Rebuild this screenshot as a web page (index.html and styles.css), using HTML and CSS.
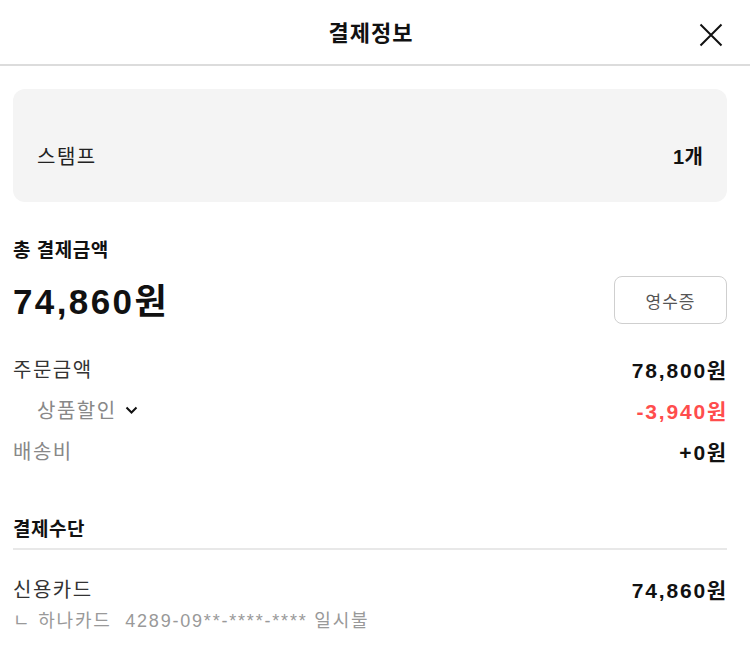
FILE: index.html
```html
<!DOCTYPE html>
<html lang="ko">
<head>
<meta charset="utf-8">
<link rel="stylesheet" href="styles.css">
</head>
<body>
<header class="header">
  <h1 class="title">결제정보</h1>
  <button class="close" aria-label="닫기">
    <svg width="24" height="24" viewBox="0 0 24 24"><path d="M1.5 1.5L22.5 22.5M22.5 1.5L1.5 22.5" stroke="#111" stroke-width="2" fill="none"/></svg>
  </button>
</header>
<main class="content">
  <section class="stamp">
    <span class="stamp-label">스탬프</span>
    <span class="stamp-val">1개</span>
  </section>
  <section class="total">
    <h2 class="sec-title">총 결제금액</h2>
    <div class="total-row">
      <span class="total-amt">74,860원</span>
      <button class="receipt">영수증</button>
    </div>
  </section>
  <section class="details">
    <div class="row"><span class="lbl dark">주문금액</span><span class="val">78,800원</span></div>
    <div class="row"><span class="lbl sub">상품할인 <svg class="chev" width="13" height="8" viewBox="0 0 13 8"><path d="M1.5 1.5L6.5 6.5L11.5 1.5" stroke="#111" stroke-width="2" fill="none"/></svg></span><span class="val red">-3,940원</span></div>
    <div class="row"><span class="lbl">배송비</span><span class="val">+0원</span></div>
  </section>
  <section class="method">
    <h2 class="sec-title method-title">결제수단</h2>
    <div class="row card-row"><span class="lbl dark">신용카드</span><span class="val">74,860원</span></div>
    <div class="card-info">ㄴ 하나카드&nbsp; 4289-09**-****-**** 일시불</div>
  </section>
</main>
</body>
</html>
```

FILE: styles.css
```css
* { box-sizing: border-box; }
html, body { margin: 0; padding: 0; background: #fff; }
body {
  font-family: "Liberation Sans", "Noto Sans CJK KR", sans-serif;
  color: #111;
  width: 750px;
}
.header {
  height: 66px;
  border-bottom: 2px solid #dcdcdc;
  display: flex;
  align-items: center;
  justify-content: center;
  position: relative;
}
.title {
  margin: 0 0 0 -8px;
  font-size: 22px;
  font-weight: 700;
  line-height: 26px;
  letter-spacing: 1px;
  padding-top: 4px;
}
.close {
  position: absolute;
  right: 27px;
  top: 23px;
  width: 24px;
  height: 24px;
  padding: 0;
  border: 0;
  background: none;
  display: flex;
}
.content {
  padding: 23px 23px 0 13px;
}
.stamp {
  background: #f4f4f4;
  border-radius: 12px;
  height: 113px;
  display: flex;
  align-items: center;
  justify-content: space-between;
  padding: 20px 24px 0 24px;
}
.stamp-label { font-size: 20px; color: #222; letter-spacing: 1.5px; }
.stamp-val { font-size: 20px; font-weight: 700; letter-spacing: 0.2px; }
.total { margin-top: 37px; }
.sec-title {
  margin: 0;
  font-size: 19px;
  font-weight: 700;
  line-height: 24px;
  letter-spacing: 0.5px;
}
.total-row {
  display: flex;
  justify-content: space-between;
  align-items: center;
  margin-top: 17px;
  height: 44px;
}
.total-amt {
  font-size: 35px;
  font-weight: 700;
  line-height: 44px;
  letter-spacing: 2.4px;
}
.receipt {
  width: 113px;
  height: 48px;
  border: 1px solid #cfcfcf;
  border-radius: 8px;
  background: #fff;
  font-family: inherit;
  font-size: 17px;
  letter-spacing: 1px;
  color: #555;
  margin-top: -4px;
}
.details {
  margin-top: 32px;
  display: flex;
  flex-direction: column;
  gap: 16px;
}
.row {
  display: flex;
  justify-content: space-between;
  align-items: center;
  height: 25px;
}
.lbl { font-size: 20px; color: #888; display: flex; align-items: center; letter-spacing: 1.5px; }
.lbl.dark { color: #333; }
.lbl.sub { padding-left: 24px; }
.chev { margin-left: 8px; }
.val { font-size: 21px; font-weight: 700; letter-spacing: 1.8px; margin-right: -1px; }
.val.red { color: #ff4d4d; }
.method { margin-top: 55px; }
.method-title {
  padding-bottom: 6px;
  border-bottom: 2px solid #e8e8e8;
}
.card-row { margin-top: 26px; }
.card-info {
  margin-top: 8px;
  font-size: 18px;
  color: #999;
  line-height: 24px;
  letter-spacing: 1.8px;
}
```
